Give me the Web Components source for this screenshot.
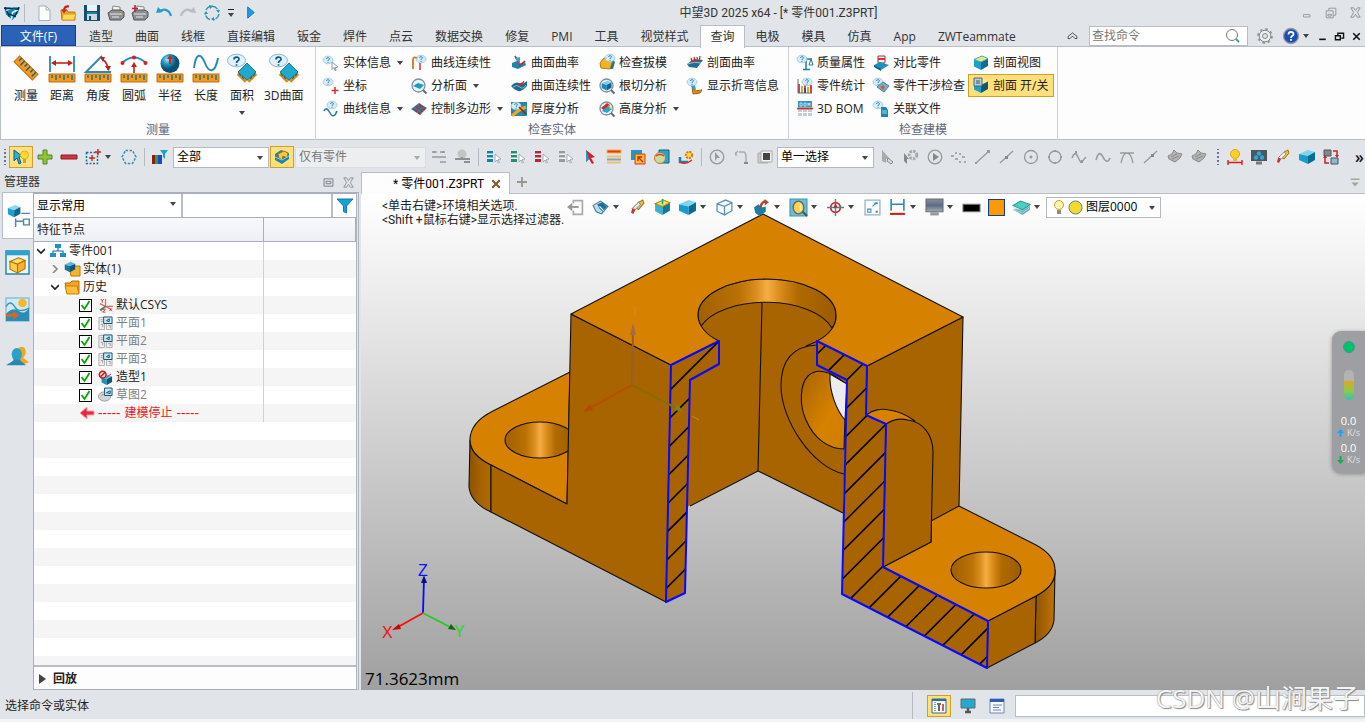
<!DOCTYPE html>
<html lang="zh-CN">
<head>
<meta charset="utf-8">
<title>中望3D 2025 x64</title>
<style>
html,body{margin:0;height:100%}
body{background:#e1e5e9;font:12px/18px "Open Sans","Noto Sans CJK SC",sans-serif;color:#222;overflow:hidden}
</style>
</head>
<body>
<z-app></z-app>
<script>
/* ---------- icon artwork ---------- */
const s=(d,c='#999',w=1,x='')=>`<path d="${d}" fill="none" stroke="${c}" stroke-width="${w}" ${x}/>`;
const f=(d,c,k='none')=>`<path d="${d}" fill="${c}" stroke="${k}"/>`;
const bubble=(x,y)=>`<g transform="translate(${x} ${y})"><ellipse cx="5" cy="4" rx="5" ry="3.8" fill="#d3ebf7" stroke="#8cc0da" stroke-width=".7"/>${s('M3.5 3C3.5 1.2 6.6 1.2 6.4 3C6.2 4 5 3.8 5 5M5 5.8v1','#2a7fa8',1)}</g>`;
const ruler=f('M1 20h26v8H1z','#f39a1c','#c06d10')+s('M4 21v3M8 21v5M12 21v3M16 21v5M20 21v3M24 21v5','#1e6e8c',1.4);
const cube=(a,b,c,k='none')=>f('M1 4.5L9 1l6 2.5L8 7z',a,k)+f('M1 4.5L8 7v8L1 11.5z',b,k)+f('M15 3.5L8 7v8l7-4z',c,k);
const lens=x=>`<circle cx="7.5" cy="7.5" r="6.5" fill="#e6f3f8" stroke="#7c929d" stroke-width="1.3"/>${x}${s('M12 12l3.5 3.5','#55707d',2)}`;
const list=c=>f('M1 2h6v3H1zM1 6h6v3H1zM1 10h6v3H1z',c)+s('M1 5h6M1 9h6','#fff')+f('M9 5l6 5-3 .5 1.5 3-1 .5L11 11l-2 2z','#fff','#aab');
const bigArea=s('M10 19.500l8 8M28 19.500l-8 8','#e08a14',3.600)+s('M11 19l1.500 3M14 22l1.500 3M27 19l-1.500 3M24 22l-1.500 3','#245f78',1.200)+f('M19 9l9 9-9 8-9-8z','#20a8cf','#1180a6')+`<ellipse cx="8.500" cy="6.500" rx="9" ry="6.300" fill="#e2f1f9" stroke="#86b9d4"/>`+s('M6 5.500C6 2.300 11.300 2.300 11 5.500C10.800 7 8.500 6.500 8.500 9M8.500 10.200v1.600','#135a80',1.700);
const plane=f('M1 1.500h6v13H1zM9 8h6v6.500H9z','#eee','#aaa')+s('M3 4h2M3 6h2M3 9h2v3M11 10h2v3','#999')+f('M6 1h9v7H6z','#cfe6f1','#0d4d70')+s('M9 5l3-2v3z','#0d4d70');
const I={
/* quick access */
logo:f('M1 3h15l-2 6-5 6-6-5z','#0d87b5')+f('M2 3l4 9M15 3l-4 9','none','#05283c')+s('M3 6l5-2 5 2-4 2-1 6','#e8f8ff',1.500)+s('M1 4l14 1M5 9l7 3','#0a3049',1.300),
newf:f('M3 1h7l4 4v10.500H3z','#fff','#a9aeb5')+s('M10 1v4h4','#a9aeb5'),
open:f('M1 5h6l1 2h7v8H2z','#f5a81c','#c87800')+f('M3 9h13l-2 6H2z','#ffd75e','#d99a14')+s('M9 1.500C5 1 4 3 4 6','#c8201c',2.200)+f('M1 4.500h6L4 8.500z','#d42a20'),
save:f('M0 0h16v16H0z','#14506e')+f('M3 0h10v6H3z','#e9f3f8')+f('M3 9h10v6H3z','#cfd8dd')+f('M5 11h2v4H5z','#14506e')+s('M3 8h10','#36b0d8'),
print:f('M5 1l7 1v5H4z','#f4f4f4','#888')+f('M0 8l4-3h9l3 2v5l-3 3H2z','#8c8f92','#555')+s('M2 9h12M4 12h7','#e6e6e6')+f('M12 9h2v1h-2z','#e8c020'),
printm:f('M5 1l7 1v5H4z','#f4f4f4','#888')+f('M0 8l4-3h9l3 2v5l-3 3H2z','#8c8f92','#555')+s('M2 9h12M4 12h7','#e6e6e6')+s('M3 0v7M0 3.500h6','#c2203c',1.600),
undo:s('M3 7C7 3 13 4 15 11','#2d9cc4',2.200)+f('M0 8l2-6 5 5z','#2d9cc4'),
redo:s('M13 7C9 3 3 4 1 11','#b9bcc0',2.200)+f('M16 8l-2-6-5 5z','#b9bcc0'),
rot:s('M8 1.200A6.800 6.800 0 0 1 14 5M15 9A6.800 6.800 0 0 1 10 14.500M6 14.500A6.800 6.800 0 0 1 1.300 9M2 5A6.800 6.800 0 0 1 8 1.200','#2a95ae',1.500,'stroke-dasharray="6 1"')+f('M12 5h4l-1.500 3zM0 9l2-3 2 3zM5 0l4 1-3 3zM7 14l3-2v4z','#2a95ae'),
play:f('M5 2l7 6-7 6z','#1b9cf0','#0b76c2'),
min:s('M3 10.500h8v3H3z','#8b9097'),
restore:s('M2.500 5.500h8v8h-8zM5.500 5V2.500h8v8H11M4.500 9.500h4v2h-4z','#8b9097'),
close:s('M3 3l3 0 2 3 2-3h3L10 8l3 5h-3L8 10l-2 3H3l3-5z','#8b9097'),
bmin:s('M4 11.500h8','#111',2),
brestore:s('M3 7h6v5H3zM6 6V4h7v6h-3','#111',1.700),
bclose:s('M4 4l8 8M12 4l-8 8','#111',1.900),
house:s('M2.500 8L8 3.500 13.500 8v2.500H11L8 7.500 5 10.500H2.500z','#333'),
find:`<circle cx="7" cy="7" r="5.500" fill="none" stroke="#777"/>`+s('M11 11l3 3','#3a8fb5',1.800),
gear:`<circle cx="8" cy="8" r="7" fill="none" stroke="#999" stroke-width="1.800" stroke-dasharray="2.700 2.800"/><circle cx="8" cy="8" r="5.800" fill="#eceef0" stroke="#888"/><circle cx="8" cy="8" r="2.500" fill="#e1e5e9" stroke="#888"/>`,
help:`<circle cx="8" cy="8" r="7.500" fill="#1a4fb8" stroke="#999" stroke-width="1.300"/>`+s('M5.500 6.500C5.500 3 10.800 3.200 10.500 6.300C10.300 8 8 7.800 8 10M8 11v1.800','#fff',1.800),
/* measuring */
measure:`<g transform="rotate(45 14 14)">${f('M1 10h26v8H1z','#f39a1c','#c06d10')}${s('M4 10v4M8 10v6M12 10v4M16 10v6M20 10v4M24 10v6','#245f78',1.400)}</g>`,
dist:ruler+s('M2 2v16M26 2v16','#2a8bb0',1.800)+s('M5 9h18','#c22020',1.600)+f('M3 9l5-3v6zM25 9l-5-3v6z','#c22020'),
angle:ruler+s('M18 2L2 18h25','#2a8bb0',2)+s('M18 5q6 4 6 11','#c22020',1.600)+f('M16 3l5 0-2 5zM21 12l6 0-2.500 5z','#c22020'),
arc:ruler+s('M2 9Q14 -2 26 9','#2a8bb0',1.800)+s('M14 19v-7','#c22020',1.600)+f('M11 13l3-5 3 5z','#c22020')+'<g fill="#d42020"><circle cx="2.500" cy="9" r="2"/><circle cx="14" cy="3.500" r="2"/><circle cx="25.500" cy="9" r="2"/></g>',
radius:ruler+'<defs><radialGradient id="b" cx=".35" cy=".3"><stop stop-color="#a4e4f6"/><stop offset=".5" stop-color="#1d97c0"/><stop offset="1" stop-color="#0a4f70"/></radialGradient></defs><circle cx="14" cy="9.500" r="9.500" fill="url(#b)"/>'+s('M14 10V4','#d02020',2)+f('M11 5l3-4 3 4z','#d02020'),
length:ruler+s('M2 14C4-2 9-1 13 9S23 20 26 4','#2a8bb0',2),
area:bigArea,
/* small ribbon icons */
qbody:bubble(0,1)+f('M9 7l6 5-3 .5 1 3h-1l-1-3-2 2z','#fff','#8d99a5'),
qcoord:bubble(0,0)+s('M12 9v7M8.500 12.500h7','#d33',1.600),
qcurve:bubble(4,0)+s('M1 10C3 6 5 8 7 12S12 16 14 10','#2a7fa5',1.600),
cont:bubble(5,0)+s('M2 14V5Q2 1 6 3','#e3701a',1.800)+s('M9 15V8','#c33',1.500),
face:lens(f('M2 8l5-3 6 2-4 4z','#1b9cc4')),
poly:f('M0 8l8-6 8 5-7 7z','#2b7fa5')+s('M2 8l8 5M5 5l7 5M8 3l6 5M4 10l7-6M8 13l6-6','#c22',1.300,'stroke-dasharray="2 1"'),
curva:f('M1 8l5-2 2 3 6-2 1 3-8 4-6-2z','#1b86ad')+s('M4 1l5 9 5-4','#d22',1.600)+f('M4 3l5-1v7z','#31a9d0'),
surfc:f('M0 8q4-5 8-3t8-2v5q-5 6-9 5t-7-5z','#136d93')+s('M5 8l8-4M9 9l4-6','#d22',1.300)+s('M2 9q4-3 7 0t6-2','#66c7e3',1),
thick:f('M0 1h16v14H0z','#2387a9')+bubble(0,1)+s('M1 15q6-6 14-9','#f7a51c',3)+s('M8 6l7 7','#8a2b10',1.600),
draft:f('M1 8l4-5 9 2-3 9-9-1z','#f2b522','#b67a08')+f('M11 14l3-9 2 2-2 7z','#25789c')+bubble(6,-1),
under:lens('<g transform="translate(2 2) scale(.7)">'+cube('#79cfe8','#1a8ab4','#0d658c')+'</g>'),
height:lens(f('M2 7l6-5 3 2-5 6z','#d82828')+f('M3 10l6-5 4 3-5 4z','#2aa4cf')+f('M9 4l4 3-2 1z','#f3c62b')),
seccurv:f('M0 9l7-5 9 1-6 8-8-1z','#1c6f94')+s('M4 3l2 6M7 2l2 7M10 2l1 6M13 1l-1 7','#d22',1.300)+s('M1 9q6-3 13-1','#7bd0e9'),
bend:f('M5 8l3 5 7-1-2 3-7 1z','#e29014','#a95f06')+f('M3 6l5 1 1 5-3-1z','#29a2c9')+bubble(0,0),
mass:s('M9 2v12M6 14.500h7M4 4h11','#1c7ea5',1.500)+s('M12 10l2-6 2 6z','#1c7ea5')+bubble(0,0),
stat:s('M2 15V6M5 15V8M8 15V5M11 15V9M14 15V7','#c33',1.800)+s('M5 15V8M11 15V9','#e9b21a',1.800)+s('M8 15v-5','#2247aa',1.800)+s('M1 1v14h14','#667')+bubble(5,0),
bom:f('M1 1h14v14H1z','#c3cdd4')+f('M1 0h14v6H1z','#3298c2')+s('M3 5V2h2v3zM7 5V2h2v3zM11 5V2l1 2 1-2v3','#cfeaf5',.8)+s('M0 7.500h16','#d22',1.600)+s('M5.500 9v6M10.500 9v6M1 11.500h14','#fff'),
compare:f('M5 1h7v7H5z','#eef','#a33')+f('M5 3h7v2H5z','#d33')+f('M1 10l6-3 9 3-8 5z','#1c93bd')+f('M1 10l7 4v2l-7-4z','#0d5d80'),
clash:bubble(0,0)+f('M4 9l6-5 6 4-5 6z','#6fb4ce','#4b7f93')+f('M7 9l3-2 2 2-2 3z','#d65a3a'),
link:bubble(0,0)+f('M8 6h5l2 3v7H8z','#1b87ad')+s('M9 10h5M9 12h5','#9bdcf0'),
secview:cube('#bfe6ee','#1ba0c8','#0f6e93')+f('M1 4.500L9 1l6 2.500L8 7z','#dff1d8','#4a8')+f('M4 4.500l5-2 3 1-4 2z','#f4e062'),
secon:cube('#fde98a','#1ba0c8','#0f5773')+f('M1 0h8v8H1z','#b5cfda','#567')+s('M3 3h4M3 5h4','#357'),
/* selection bar */
pick:f('M1 1l8 6-3 1 2 6-2 1-2-6-3 3z','#26aee0','#0b5f88')+`<circle cx="11.500" cy="6" r="4" fill="#ffd83c" stroke="#e9b010"/>`+s('M10 11h3M10 13h3','#c88a10',1.400),
plus:f('M6 1h4v5h5v4h-5v5H6v-5H1V6h5z','#8fc637','#55851a'),
minus:f('M0 6h16v4H0z','#d2353c','#8d1c22'),
box:s('M1.500 3.500h11v11h-11z','#1c6e9a',1.500,'stroke-dasharray="2 1.500"')+s('M7 6v6M4 9h6M13 0v6M10 3h6','#c22',1.400),
hex:s('M4.500 1.500h7L15 8l-3.500 6.500h-7L1 8z','#3690b4',1.500,'stroke-dasharray="2.500 1.500"'),
pal:f('M0 6h3v9H0z','#8c1d1d')+f('M3 6h3v9H3z','#29a329')+f('M6 6h4v9H6z','#1d46c8')+f('M8 1h8l-3 4v5l-2-2V5z','#1aa3cf'),
sync:f('M1 5l6-4 8 3v6l-7 5-7-4z','#1b87ad')+f('M4 5l6-3 4 2-1 5-4-2-1 4-3-2z','#ffc83a','#a8720a')+s('M1 8l7 3 7-4','#7fd0e6'),
g1:s('M1 3h5M9 3h5M1 8h14M9 13h6','#999',1.600)+s('M3 2v2M12 2v2','#999',2),
g2:`<circle cx="7" cy="5" r="4.500" fill="#c4c4c4"/>`+s('M0 10h15M9 13h6M7 10V8','#8f8f8f',1.800),
l1:list('#16819f'),l2:list('#2b8a78'),l3:list('#b22a3a'),l4:list('#999'),
redcur:f('M4 1l9 7-4 1 3 5-2 1-3-5-3 3z','#d22030')+f('M4 1v12l3-3z','#1aa0cf'),
rows:f('M1 1h14v3H1z','#e6342a','#f6b32c')+s('M1 7.500h14M1 13.500h14','#e3c27b',2)+s('M1 10.500h14','#8fa0aa',2),
orange:f('M1 1h11v10H1z','#1a9bc4')+f('M5 5h10v10H5z','#f8bd2e','#d93a22')+s('M8 8l5 5M8 12V8h4','#c22',1.300),
glob:f('M5 1h10v13H5z','#2ba4ca','#125f80')+`<circle cx="6" cy="9" r="5.500" fill="#c8dba2" stroke="#b47e2a"/>`+s('M2 7q4-3 8 0','#d33',1.400),
saw:s('M2 8v5h8','#1585b0',2.600)+s('M2 13q6 3 12-2','#c33',1.600)+`<circle cx="11" cy="6" r="3.200" fill="#ffd34d" stroke="#d07a14" stroke-width="2" stroke-dasharray="2 1"/>`,
gclock:`<circle cx="8" cy="8" r="6.800" fill="none" stroke="#999" stroke-width="1.300"/>`+f('M6 3l5 6-3 0-2 3z','#999'),
ghook:s('M2 5l3-3M3 3v4M6 3h4q3 0 3 5v5','#aaa',1.500)+s('M11 14h4','#888',2),
gsq:f('M1 4h10v10H1z','#ccc','#aaa')+f('M4 2h11v11H4z','#f4f4f4','#aaa')+f('M6 4h7v7H6z','#444'),
gcur:f('M3 1l8 9-4 0 0 4-4-2z','#aaa')+f('M9 9l5 4-2 2-4-3z','#ddd','#888'),
ggear:`<circle cx="10" cy="6" r="3.800" fill="none" stroke="#aaa" stroke-width="3" stroke-dasharray="2.500 1"/>`+f('M1 4l5 6-2 0 0 5-3-3z','#888'),
gplay:`<circle cx="8" cy="8" r="6.800" fill="none" stroke="#999" stroke-width="1.300"/>`+f('M6 4l6 4-6 4z','#888'),
gdots:f('M0 6h3v2H0zM4 9h3v2H4zM8 4h2v2H8zM11 7h3v2h-3zM8 12h2v2H8zM4 3h2v2H4zM13 12h2v2h-2z','#aaa'),
gline:s('M1 14L13 3','#999',1.300)+f('M12 1h3v3h-3zM0 13h2v2H0z','#999'),
gline2:s('M1 14L14 2','#999',1.300)+f('M6 7h3v3H6z','#888'),
gline3:s('M1 14L14 2','#999',1.300)+f('M8 5h3v3H8z','#888'),
gcirc:`<circle cx="8" cy="8" r="6.500" fill="none" stroke="#999" stroke-width="1.300"/><circle cx="8" cy="8" r="1.500" fill="#999"/>`,
gcirc2:`<circle cx="8" cy="8" r="6" fill="none" stroke="#999" stroke-width="1.300"/>`+f('M7 1h2v2H7zM7 13h2v2H7zM1 7h2v2H1zM13 7h2v2h-2z','#999'),
gwave:s('M1 9Q4 1 7 8t4 5 4-5','#999',1.400)+f('M4 2h2v3H4zM10 11h2v3h-2z','#999'),
gwave2:s('M1 11Q4 0 8 8t7 1','#999',1.600),
gtan:s('M1 4h14M2 14Q4 4 8 4t6 10','#999',1.300),
gsurf:f('M1 7l4-2 2-4 3 3 5 1-2 4-5 4-6-3z','#b4b4b4','#888')+s('M4 8l6-3M5 10l7-3','#888'),
bulbm:`<circle cx="8" cy="5" r="4.500" fill="#ffd024" stroke="#e0a310"/>`+f('M6 9h4v3H6z','#e8b93a')+s('M1 13.500h14M1 11v5M15 11v5','#c22',1.400),
mon:f('M0 1h16v11H0z','#4d575f')+s('M5 14h6','#777',3)+`<g fill="#2aa9d4"><circle cx="8" cy="4.500" r="2.200"/><circle cx="5" cy="8.500" r="2.200"/><circle cx="11" cy="8.500" r="2.200"/></g>`,
eraser:f('M9 3l4-2 1 3-5 6-3-2z','#f4bc3b','#a77413')+f('M9 3l2 2-5 5-3-1z','#eee','#999')+f('M3 9l3 1-2 4-2-1z','#cd2d2d'),
cube:f('M0 5l9-4 7 2-7 4z','#7fd4ee')+f('M0 5l9 2v8l-9-4z','#1a9ccb')+f('M16 3L9 7v8l7-4z','#0b6b93'),
swap:f('M1 1h7v6H1z','#7d8890','#555')+f('M8 9h7v6H8z','#8fb8cc','#456')+s('M10 2h4v5M6 14H2V9','#c22',1.500)+f('M12 6h4l-2 3zM0 9h4l-2-3z','#c22'),
/* manager */
pin:s('M2.500 3.500h11v9h-11zM5 6.500h6v3H5z','#7a8089',1.200),
funnel:f('M0 1h16L9.500 8v7l-3-1.500V8z','#15a0d6','#0a7dad'),
tree0:s('M10 6.500h6M6 10v6M6 12h5M11.500 10.500h4v4h-4z','#4f89a8',1)+'<g transform="scale(.62)">'+cube('#8ed8ee','#1ba0cc','#0a678e')+'</g>',
tree1:f('M0 0h16v16H0z','#eaf6fb','#2186ab')+f('M0 0h16v3H0z','#2ba5ce')+'<g transform="translate(2 4) scale(.75)">'+cube('#ffe06a','#ffd04a','#f5b52a','#c26a05')+'</g>',
tree2:f('M0 0h16v16H0z','#cfe9f5','#8cc0d8')+s('M0 6q3-5 6 0t10 1','#4b92b5')+f('M0 11q5-5 9-2t7-2v9H0z','#2b8db3')+`<circle cx="11.500" cy="3.500" r="3" fill="#f8b62a"/>`+s('M0 12h6','#e2621f',2)+f('M5 9l4 3-4 3z','#e2621f'),
tree3:f('M8 3q2-3 5-1q2 3-1 7l4 3-6 2z','#f2a51f')+`<ellipse cx="7.500" cy="6.500" rx="3.500" ry="4.500" fill="#2ba0c8"/>`+f('M0 14l5-3v-1h5v1l4 3z','#2488b0'),
part:f('M5 1h6v4H5zM0 10h6v4H0zM10 10h6v4h-6z','#1a93bd')+s('M8 5v3M3 10V8h10v2','#1a6f92',1.200),
solid:f('M5 5h11v10H7z','#f3b52b','#b47b0c')+'<g transform="scale(.75)">'+cube('#5cb9d8','#17779d','#0c5878')+'</g>',
folder:f('M1 4h5l2-2h7v12H3z','#f3a620','#b96a08')+f('M1 7h12l2 8H3z','#ffbf3a','#c87a0a'),
csys:s('M8 1v8h8M8 9l-5 5M2 6l12 6','#d66',1.300)+s('M2 13l6-4','#2b8a6a',1.500)+s('M3 1l1.500 2L6 1M4.500 3v2M12 11l3 3M15 11l-3 3M5 12h3l-3 3h3','#c33'),
plane,
shape:'<g transform="translate(3 4) scale(.8)">'+cube('#66bfdd','#1a93bd','#0c5878')+'</g>'+`<circle cx="5" cy="5" r="3.600" fill="#f6d0d0" stroke="#c01818" stroke-width="1.600"/>`+s('M2.500 7.500l5-5','#c01818',1.500)+s('M9 8l5-4','#d33'),
sketch:`<ellipse cx="7" cy="9" rx="6.500" ry="5" fill="#d5d5d5" stroke="#999"/>`+s('M3 9q4-5 8-1','#999')+f('M7 0h8v8H7z','#cfe6f1','#0d4d70')+s('M9 5l4-2v3z','#0d4d70'),
stop:f('M1 8l7-6v4h7v4H8v4z','#e8283c','#f7a0a8'),
/* view bar */
exit:s('M6 4V1.500h8.500v13H6V11','#aaa',1.600)+s('M4 7.500h7','#999',1.800)+f('M0 7.500l5-4v8z','#999'),
view:f('M1 6l7-4 7 5-6 7-5-2z','#bcdcea','#3d7c99')+f('M5 5l5-2 4 4-4 5-3-3z','#1a6f9c')+s('M7 7l4 4','#fff'),
ycube:cube('#ffe34a','#35b3d4','#137a9e')+f('M1 4.500L9 1l6 2.500L8 7z','#ffe34a','#a88a10')+s('M8 5V0','#1a9','1.500'),
wire:s('M1 4.500L9 1l6 2.500v7.500L8 15l-7-3.500zM1 4.500L8 7v8M8 7l7-3.500','#5691b0',1.200),
curv2:f('M1 8l4-3 3 3 4-1v5l-6 4-4-3z','#167fa9')+s('M7 9Q7 3 12 2','#b34633',2.200)+f('M11 0l4 3-4 3z','#b34633'),
fit:f('M0 0h16v16H0z','#6fbcd8','#3097bd')+`<ellipse cx="8" cy="8" rx="5" ry="6" fill="#ffd44a" stroke="#666" stroke-width="1.300"/>`+s('M12 12l4 4','#555',2)+s('M10 5v6','#fff6c0',1.500),
target:`<circle cx="8" cy="8" r="4.500" fill="none" stroke="#c22" stroke-width="1.600"/>`+s('M8 0v16M0 8h16','#4d7f9f',1.300)+f('M8 4l2 4H6z','#c22'),
marks:s('M1 1h14v14H1z','#8fb5c8',1.200)+s('M3.500 9.500h3v3h-3zM8 7l3-3','#3892b8')+f('M10 3h3v2h-3zM11 11h2v2h-2z','#3892b8'),
dim:s('M2 0v11M14 0v11M2 5h12','#2a8bb0',1.500)+s('M1 14h14','#c22',2),
screen:'<defs><linearGradient id="m" x2="0" y2="1"><stop stop-color="#8a9098"/><stop offset=".5" stop-color="#5c6b85"/><stop offset="1" stop-color="#a5afbb"/></linearGradient></defs>'+f('M0 0h16v12H0z','url(#m)','#666c74')+s('M4 14h8','#999',3),
black:f('M0 5h16v7H0z','#000','#777'),
osq:f('M.5.5h15v15H.5z','#ff9900','#11408f'),
layer:f('M0 10l9 5 7-5V6l-9 3z','#6aa9b5')+s('M0 8l9 3 7-5M0 10l9 3 7-5','#b8dde6',.8)+f('M0 6l7-4 9 3-7 5z','#4dd0c0','#2a9f98'),
bulb:`<circle cx="8" cy="6" r="4.500" fill="#fff6b0" stroke="#c9a01c"/>`+s('M6 12h4M6 14h4','#666',1.500),
dot:`<circle cx="8" cy="8" r="7" fill="#f4da2c" stroke="#4b8398"/>`,
tabx:s('M3 3l10 10M13 3L3 13','#7b5d2a',2.600),
addt:s('M8 3v10M3 8h10','#9c948f',1.800),
down:f('M2 3h11v2H2zM3 8h9l-4.500 5z','#aaa49e'),
/* status bar */
st1:f('M1 1h14v14H1z','#f4f8fb','#2d6da3')+f('M1 1h14v2H1z','#2d6da3')+s('M4 4v10','#777',1.500,'stroke-dasharray="1 1"')+s('M8 13V7M6 6h4','#444',1.600)+s('M12 13V6','#c33',1.600),
st2:f('M1 1h14v9H1z','#25a8d0','#666')+s('M8 10v3M5 14h6','#555',2.400),
st3:f('M1 1h14v14H1z','#f6f8fb','#6d86b8')+f('M1 1h14v3H1z','#2f5bb5')+s('M4 7h9M4 9.500h6M4 12h8','#6d86b8')
};

/* ---------- base element ---------- */
class Base extends HTMLElement{
  connectedCallback(){
    if(this.shadowRoot)return;
    this.attachShadow({mode:'open'}).innerHTML=`<style>
*{box-sizing:border-box}
button,input,select{font:inherit;color:inherit;margin:0;padding:0;border:0;background:none;border-radius:0;outline:0}
z-icon{flex:none}
${this.css()}</style>${this.html()}`;
  }
  at(n,d=''){return this.getAttribute(n)??d}
  css(){return ''}
}
const def=(n,css,html)=>customElements.define(n,class extends Base{css(){return css}html(){return html(this)}});

def('z-icon',':host{display:inline-flex}svg{display:block;overflow:visible}',e=>{
  const z=e.at('size','16'),v=e.at('box','16');
  return `<svg width="${z}" height="${z}" viewBox="0 0 ${v} ${v}" aria-hidden="true">${I[e.at('name')]||''}</svg>`;
});
def('z-arrow',':host{display:inline-block;flex:none;width:0;height:0;border:3px solid transparent;border-top:4px solid #444;border-bottom:0}',()=>'');
def('z-sep',':host{display:block;flex:none;width:7px;height:18px;background:linear-gradient(#b6bac0,#b6bac0) center/1px 100% no-repeat}',()=>'');
def('z-grip',':host{display:block;flex:none;width:9px;height:16px;background:radial-gradient(circle,#6f7683 1px,transparent 1px) center/4px 4px repeat-y}',()=>'');

/* icon-only button, optionally with a drop-down mark */
def('z-tool',`:host{display:flex;flex:none}
button{display:flex;align-items:center;justify-content:center;width:24px;height:22px}
:host([on]) button{background:#ffe07a;border:1px solid #cf9f2e}
:host([menu]) button{width:36px;justify-content:flex-start;padding-left:4px;gap:4px}
:host([wide]) button{width:25px}:host([wide][menu]) button{width:37px}`,
e=>`<button type="button" aria-label="${e.at('label',e.at('icon'))}"><z-icon name="${e.at('icon')}" size="${e.at('size','16')}"></z-icon>${e.hasAttribute('menu')?'<z-arrow></z-arrow>':''}</button>`);

/* icon-over-text ribbon button */
def('z-big',`:host{display:block}
button{display:flex;flex-direction:column;align-items:center;min-width:36px;padding:7px 4px 0}
span{margin-top:4px;line-height:20px;white-space:nowrap}z-arrow{margin-top:5px}`,
e=>`<button type="button"><z-icon name="${e.at('icon')}" size="28" box="28"></z-icon><span><slot></slot></span>${e.hasAttribute('menu')?'<z-arrow></z-arrow>':''}</button>`);

/* one-line ribbon button */
def('z-cmd',`:host{display:block}
button{display:flex;align-items:center;height:23px;padding:0 4px;white-space:nowrap;border:1px solid transparent}
span{margin:0 6px 0 4px}
:host([on]) button{background:#ffe07a;border-color:#cf9f2e}
:host([on]) span{margin-right:0}`,
e=>`<button type="button"><z-icon name="${e.at('icon')}"></z-icon><span><slot></slot></span>${e.hasAttribute('menu')?'<z-arrow></z-arrow>':''}</button>`);

def('z-group',`:host{display:flex;flex-direction:column;border-right:1px solid #cdd1d6;box-sizing:border-box;height:93px}
div{display:flex;flex:1}p{margin:0;text-align:center;line-height:20px;color:#5f6676}`,
e=>`<div><slot></slot></div><p>${e.at('label')}</p>`);
def('z-col',':host{display:block;padding-top:4px}',()=>'<slot></slot>');

/* labelled drop-down list */
def('z-combo',`:host{display:flex;position:relative;background:#fff;border:1px solid #b5bac2;height:21px;box-sizing:border-box;align-items:center;color:#000}
select{appearance:none;flex:1;min-width:0;height:100%;padding:0 16px 0 3px;opacity:1}
z-arrow{position:absolute;right:5px;top:8px;pointer-events:none}
:host([off]){background:#eceef0;color:#777;border-color:#d9dce0}:host([off]) z-arrow{opacity:.4}
:host([plain]){border:0;height:100%}`,
e=>`<slot></slot><select aria-label="${e.at('label')}" ${e.hasAttribute('off')?'disabled':''} style="color:inherit"><option>${e.at('value')}</option></select><z-arrow></z-arrow>`);

/* ---------- window parts ---------- */
def('z-title',`:host{display:flex;height:25px;align-items:center}
h1{flex:1;margin:0;font:12px/18px Roboto,"Noto Sans CJK SC",sans-serif;text-align:center;color:#333;white-space:nowrap}
.q,.w{display:flex;align-items:center}.w{width:70px}z-icon.l{margin:0 1px 0 3px}z-sep{margin-right:4px}
.m{width:14px;height:8px;display:flex;justify-content:center;align-items:flex-start}.m button{display:flex;border-top:1px solid #222;padding-top:3px}`,
()=>`<div class="q"><z-icon class="l" name="logo" size="17"></z-icon><z-sep></z-sep>
${[['newf','新建'],['open','打开'],['save','保存'],['print','打印'],['printm','批量打印'],['undo','撤销'],['redo','重做'],['rot','重生成']].map(a=>`<z-tool icon="${a[0]}" label="${a[1]}"></z-tool>`).join('')}
<div class="m"><button type="button" aria-label="自定义"><z-arrow></z-arrow></button></div><z-tool icon="play" label="运行" size="15"></z-tool></div>
<h1>中望3D 2025 x64 - [* 零件001.Z3PRT]</h1>
<div class="w"><z-tool icon="min" label="最小化" size="13"></z-tool><z-tool icon="restore" label="还原" size="14"></z-tool><z-tool icon="close" label="关闭" size="15"></z-tool></div>`);

def('z-menubar',`:host{display:flex;height:22px;align-items:stretch;position:relative}
nav{display:flex}a{padding:2px 11px 0;line-height:20px;color:#333;text-decoration:none;white-space:nowrap}
a.file{background:#2a62b8;color:#fff;border:1px solid #1b3f86;width:75px;margin:0 2px 0 1px;padding:1px 0 0;text-align:center;height:21px}
a.on{background:#fdfdfd;border:1px solid #b9bec6;border-bottom:0;padding:1px 9px 0 10px;width:45px;margin-bottom:-1px;position:relative;z-index:1}
.r{margin-left:auto;display:flex;align-items:center}
label{display:flex;align-items:center;width:159px;height:20px;background:#fff;border:1px solid #b9bec6;margin:0 5px 0 5px}
input{flex:1;min-width:0;padding-left:2px;line-height:18px}input::placeholder{color:#777;opacity:1}
label z-icon{margin-right:6px}.b z-tool{width:17px;justify-content:center}.b{display:flex}.h{margin:0 -1px 0 2px}`,
()=>`<nav><a href="#" class="file">文件(F)</a>${'造型,曲面,线框,直接编辑,钣金,焊件,点云,数据交换,修复,PMI,工具,视觉样式,查询,电极,模具,仿真,App,ZWTeammate'.split(',').map(t=>`<a href="#"${t=='查询'?' class="on" aria-current="page"':''}>${t}</a>`).join('')}</nav>
<div class="r"><z-tool icon="house" label="收起功能区" size="13"></z-tool><label><input type="search" aria-label="查找命令" placeholder="查找命令"><z-icon name="find"></z-icon></label><z-tool icon="gear" label="设置"></z-tool><z-tool class="h" menu icon="help" label="帮助"></z-tool>
<div class="b"><z-tool icon="bmin" label="最小化" size="13"></z-tool><z-tool icon="brestore" label="还原" size="13"></z-tool><z-tool icon="bclose" label="关闭" size="13"></z-tool></div></div>`);

const cmds=a=>a.map(([i,t,o=''])=>`<z-cmd icon="${i}" ${o}>${t}</z-cmd>`).join('');
def('z-ribbon',`:host{display:flex;background:#fdfdfd;border:1px solid #b9bec6;border-right:0;height:94px;box-sizing:border-box}
.g1{width:315px}.g1 z-big:first-child{margin-left:7px}
.g2{width:473px}.g3{width:269px}.g2 z-col:first-child{margin-left:2px}.g3 z-col:first-child{margin-left:3px}
.a{width:88px}.b{width:100px}.c{width:76px}.d{width:100px}`,
()=>`<z-group class="g1" label="测量">${[['measure','测量'],['dist','距离'],['angle','角度'],['arc','圆弧'],['radius','半径'],['length','长度']].map(a=>`<z-big icon="${a[0]}">${a[1]}</z-big>`).join('')}<z-big icon="area" menu>面积</z-big><z-big icon="area">3D曲面</z-big></z-group>
<z-group class="g2" label="检查实体">
<z-col class="a">${cmds([['qbody','实体信息','menu'],['qcoord','坐标'],['qcurve','曲线信息','menu']])}</z-col>
<z-col class="b">${cmds([['cont','曲线连续性'],['face','分析面','menu'],['poly','控制多边形','menu']])}</z-col>
<z-col class="a">${cmds([['curva','曲面曲率'],['surfc','曲面连续性'],['thick','厚度分析']])}</z-col>
<z-col class="a">${cmds([['draft','检查拔模'],['under','根切分析'],['height','高度分析','menu']])}</z-col>
<z-col>${cmds([['seccurv','剖面曲率'],['bend','显示折弯信息']])}</z-col></z-group>
<z-group class="g3" label="检查建模">
<z-col class="c">${cmds([['mass','质量属性'],['stat','零件统计'],['bom','3D BOM']])}</z-col>
<z-col class="d">${cmds([['compare','对比零件'],['clash','零件干涉检查'],['link','关联文件']])}</z-col>
<z-col>${cmds([['secview','剖面视图'],['secon','剖面 开/关','on']])}</z-col></z-group>`);

const tools=t=>t.split(' ').map(n=>n=='|'?'<z-sep></z-sep>':`<z-tool icon="${n}"></z-tool>`).join('');
def('z-selbar',`:host{display:flex;height:32px;padding-top:2px;box-sizing:border-box;align-items:center;overflow:hidden}
.s1{width:96px;margin:0 1px}.s2{width:131px;margin:0 1px}.s3{width:97px;margin:0 1px 0 0}.e{margin:0 1px 0 2px}
b{margin-left:auto;padding-right:1px;font-size:16px;font-weight:600;color:#111}`,
()=>`<z-grip></z-grip><z-tool icon="pick" on label="智能选择"></z-tool>${tools('plus minus')}<z-tool icon="box" menu label="框选"></z-tool>${tools('hex | pal')}
<z-combo class="s1" label="过滤器" value="全部"></z-combo><z-tool icon="sync" on label="同步"></z-tool><z-combo class="s2" off label="范围" value="仅有零件"></z-combo>
${tools('g1 g2 | l1 l2 l3 l4 redcur rows orange glob saw | gclock ghook gsq')}<z-combo class="s3" label="选择方式" value="单一选择"></z-combo>
${tools('gcur ggear gplay gdots gline gline2 gcirc gcirc2 gwave gwave2 gtan gline3 gsurf gsurf')}<z-grip class="e"></z-grip>${tools('bulbm mon eraser cube swap')}<b>»</b>`);

/* ---------- feature tree ---------- */
const chev=o=>`<svg class="x" width="8" height="8" viewBox="0 0 8 8">${o?s('M0 2l4 4 4-4','#222',1.6):s('M2 0l4 4-4 4','#888',1.6)}</svg>`;
def('z-tree',`:host{display:flex;flex-direction:column;flex:1;min-height:0;background:#fff repeating-linear-gradient(#fff 0 18px,#f5f5f5 18px 36px) 0 24px no-repeat}
table{border-collapse:separate;border-spacing:0;table-layout:fixed;width:100%}
th{height:24px;padding:0 3px;text-align:left;font-weight:400;background:linear-gradient(#f8f9fb,#eceff5);border:solid #a9b0bb;border-width:0 1px 1px 0}
th:first-child,td:first-child{width:230px}
td{height:18px;padding:0;line-height:18px;white-space:nowrap;border:0}td:first-child{border-right:1px solid #cdd0da}
td>div{display:flex;align-items:center;height:18px}
.x{margin:0 5px 0 3px}.x+z-icon,input+z-icon{margin-right:3px}
.l1{padding-left:14px}.l2{padding-left:45px}.dim{color:#808080}.stop{color:#f01818}.stop z-icon{margin-right:3px}.stop b{font-weight:400;margin:0 4px}.stop i{font-style:normal;font-size:14px}
input{appearance:none;width:13px;height:13px;border:1px solid #000;margin-right:6px;background:#fff url("data:image/svg+xml,%3Csvg xmlns='http://www.w3.org/2000/svg' viewBox='0 0 11 11'%3E%3Cpath d='M1.500 5l3 4 5-8' fill='none' stroke='%2309a409' stroke-width='1.800'/%3E%3C/svg%3E")}`,
()=>{
 const row=(c,h)=>`<tr><td><div class="${c}">${h}</div></td><td></td></tr>`;
 const item=(i,t,c='')=>row('l2 '+c,`<input type="checkbox" checked aria-label="${t}"><z-icon name="${i}" size="15"></z-icon><span>${t}</span>`);
 return `<table><thead><tr><th scope="col">特征节点</th><th scope="col"></th></tr></thead><tbody>
${row('',chev(1)+'<z-icon name="part"></z-icon><span>零件001</span>')}
${row('l1',chev(0)+'<z-icon name="solid"></z-icon><span>实体(1)</span>')}
${row('l1',chev(1)+'<z-icon name="folder"></z-icon><span>历史</span>')}
${item('csys','默认CSYS')}${item('plane','平面1','dim')}${item('plane','平面2','dim')}${item('plane','平面3','dim')}${item('shape','造型1')}${item('sketch','草图2','dim')}
${row('l2 stop','<z-icon name="stop"></z-icon><i>-----</i><b>建模停止</b><i>-----</i>')}</tbody></table>`;
});

def('z-manager',`:host{display:flex;flex-direction:column;width:359px;flex:none}
header{display:flex;height:20px;align-items:center;padding:0 1px 0 4px}h2{flex:1;margin:0;font:inherit;color:#333}
header z-tool{width:20px;justify-content:center}
main{flex:1;display:flex;min-height:0}
nav{width:33px;flex:none}nav button{display:flex;align-items:center;justify-content:center;width:31px;height:47px;margin-left:2px}
nav button.on{background:#fdfdfd;border:1px solid #b9bec6;border-right:0}
section{flex:1;display:flex;flex-direction:column;min-width:0;border:1px solid #a9b0bb;border-right:3px double #b0b5be;border-top-width:2px}
.f{display:flex;height:24px;border-bottom:1px solid #a9b0bb;background:#fff}
.f z-combo{width:149px;border-right:2px solid #b9bec6;height:23px}.f input{flex:1;min-width:0;background:#fff}.f button{width:25px;display:flex;align-items:center;justify-content:center;border-left:2px solid #b9bec6}
.p{height:24px;flex:none;display:flex;align-items:center;gap:7px;padding:2px 0 0 5px;background:#fdfdfd;border-top:2px solid #b9bec6;font-weight:600}
.p i{border:5px solid transparent;border-left:7px solid #444;border-right:0}`,
()=>`<header><h2>管理器</h2><z-tool icon="pin" label="浮动" size="13"></z-tool><z-tool icon="close" label="关闭" size="15"></z-tool></header>
<main><nav>${['历史管理','零件库','视图管理','角色管理'].map((t,i)=>`<button type="button" class="${i?'':'on'}" aria-label="${t}"><z-icon name="tree${i}" size="23"></z-icon></button>`).join('')}</nav>
<section><div class="f"><z-combo plain label="显示" value="显示常用"></z-combo><input aria-label="过滤"><button type="button" aria-label="筛选"><z-icon name="funnel" size="16"></z-icon></button></div>
<z-tree></z-tree><button class="p" type="button"><i></i>回放</button></section></main>`);

/* ---------- sectioned solid ---------- */
const hatch=Array.from({length:22},(_,k)=>{const c=1060+k*27.8;return `M600 ${(c-600).toFixed(1)}L1000 ${(c-1000).toFixed(1)}`}).join('');
const SL='M671 365L719 341V364L690 380L685 593L666 602Z', SR='M817 341V365L847 380L842 594L987 668L988 621L883 567L886 424L866 415L867 366Z';
const TOPF='#d68200',SIDE='#a86400';
def('z-model',`:host{display:block}svg{display:block;width:100%;height:100%}text{font:16px "Liberation Sans",sans-serif}`,
()=>`<svg viewBox="361 194 1004 496" role="img" aria-label="剖面模型"><defs>
<linearGradient id="h"><stop stop-color="#a06000"/><stop offset=".3" stop-color="#bb7105"/><stop offset=".42" stop-color="#d98d1e"/><stop offset=".5" stop-color="#f5ad42"/><stop offset=".6" stop-color="#d98a1a"/><stop offset=".72" stop-color="#b06a00"/><stop offset="1" stop-color="#9b5c00"/></linearGradient>
<linearGradient id="el"><stop stop-color="#8e5400"/><stop offset=".6" stop-color="#a86400"/><stop offset="1" stop-color="#b06a00"/></linearGradient>
<linearGradient id="er"><stop stop-color="#8e5400"/><stop offset="1" stop-color="#c07408"/></linearGradient>
<linearGradient id="bo" x1="0" x2="1" y1="0" y2="1"><stop stop-color="#a86400"/><stop offset=".6" stop-color="#d68200"/><stop offset="1" stop-color="#cf7d00"/></linearGradient>
<clipPath id="c"><path d="${SL}${SR}"/></clipPath><clipPath id="lc"><path d="M460 400H568V480H460z"/></clipPath></defs>
<g stroke="#111" stroke-width="1.1" stroke-linejoin="round" fill="${SIDE}">
<path d="M470 440L469 487C470 497 478 506 491 512V465C477 458 470 449 470 440z" fill="url(#el)"/>
<path d="M570 372L493 411C479 418 470 428 470 440C470 449 477 458 491 465L567 504z" fill="${TOPF}"/>
<ellipse cx="540" cy="440" rx="35" ry="18" fill="url(#h)" clip-path="url(#lc)"/>
<path d="M571 314L671 365L666 602L491 512V465L567 504z"/>
<path d="M698 300H836V345L817 364L847 380L843 513L758 471L687 507L690 380L719 364V352H698z" stroke="none"/>
<path d="M690 506L758 471L843 513" fill="none"/><path d="M762 303L758 471"/>
<path d="M698 315A69 36 0 0 1 836 315C836 322 834 326 832 328A69 36 0 0 0 701 326C699 323 698 319 698 315z" fill="url(#h)"/>
<path d="M806 346L818 341M817 345C796 346 781 356 781 386C781 420 812 467 844 474" fill="none"/>
<path d="M846 384C830 370 816 368 808 376C800 384 799 405 806 420C814 439 829 449 844 449z" fill="url(#bo)"/>
<path d="M830 374L847 384L845 420C837 411 829 392 830 374z" fill="#ececf0"/>
<path d="M963 317L867 366L866 415L886 424L883 567L959 506z"/>
<path d="M1055 570L1054 620C1053 629 1047 637 1035 643L1036 596C1049 589 1056 580 1055 570z" fill="url(#er)"/>
<path d="M988 621L1036 596L1035 643L987 668z"/>
<path d="M883 567L931 542V521L959 506L1036 545C1049 552 1055 560 1055 570C1056 580 1049 589 1036 596L988 621z" fill="${TOPF}"/>
<ellipse cx="986" cy="570" rx="35" ry="18" fill="url(#h)"/>
<path d="M866 415C872 410 882 408 889 410C898 411 908 416 915 421L886 424z" fill="${TOPF}"/>
<path d="M886 424C892 420 900 418 908 420C923 422 933 435 933 452L931 542L883 567z"/>
<path d="M763 214L963 317L867 366L817 341C829 335 837 325 836 315A69 36 0 0 0 698 315C698 325 706 335 719 341L671 365L571 314z" fill="${TOPF}"/></g>
<path d="${SL}${SR}" fill="${SIDE}"/><path d="${hatch}" clip-path="url(#c)" stroke="#000" stroke-width="1.600"/>
<path d="${SL}${SR}" fill="none" stroke="#0808ff" stroke-width="2" stroke-linejoin="round"/>
<g stroke-width="2" fill="none"><path d="M632 385L633 330" stroke="#9d5a2a"/><path d="M633 323l-3 12h6z" fill="#a56a48" stroke="none"/><path d="M635 306v9" stroke="#cf8a38" stroke-width="1"/><path d="M632 385L590 408" stroke="#b85000"/><path d="M583 412l7-8 3 6z" fill="#b84800" stroke="none"/><path d="M632 385L676 408" stroke="#8b6b00"/><path d="M683 412l-9-2 4-6z" fill="#7b8412" stroke="none"/><path d="M692 416l7 4" stroke="#c98524" stroke-width="1"/></g>
<g stroke-width="1.800" fill="none"><path d="M423 613L424 578" stroke="#0808ff"/><path d="M424 575l-3 8h6z" fill="#001090"/><path d="M423 613L398 627" stroke="#f01010"/><path d="M392 630l7-6 2 5z" fill="#c00"/><path d="M423 613L450 627" stroke="#22cc22"/><path d="M456 630l-8-1 3-5z" fill="#175f17"/></g>
<text x="418" y="576" fill="#1010ff">Z</text><text x="382" y="638" fill="#f01010">X</text><text x="454" y="637" fill="#22dd22">Y</text></svg>`);

/* network speed overlay */
def('z-net',`:host{display:flex;flex-direction:column;align-items:center;width:33px;height:142px;box-sizing:border-box;background:#9d9fa2;border-radius:9px 0 0 9px;box-shadow:0 1px 4px #0005;color:#fff;font-size:11px;line-height:14px;padding-top:10px}
i{width:12px;height:12px;border-radius:6px;background:#00c268;border:1px solid #4d8fa0}
u{width:10px;height:30px;margin:17px 0 14px;border-radius:5px;background:linear-gradient(#b2b3b5 36%,#e5a51e 36%,#8dc94a 70%,#2fc2b4)}
small{display:flex;align-items:center;gap:3px;font-size:9px;line-height:9px;color:#dfe0e2}div+div{margin-top:4px}div{text-align:center}`,
()=>`<i></i><u></u><div>0.0<small><svg width="7" height="8" viewBox="0 0 7 8"><path d="M3.500 0L7 4H4.500v4h-2V4H0z" fill="#18a4f5"/></svg>K/s</small></div><div>0.0<small><svg width="7" height="8" viewBox="0 0 7 8"><path d="M3.500 8L7 4H4.500V0h-2v4H0z" fill="#10b050"/></svg>K/s</small></div>`);

const vt=t=>t.split(' ').map(n=>`<z-tool wide size="17" icon="${n.replace('+','')}" ${n.endsWith('+')?'menu':''}></z-tool>`).join('');
def('z-view',`:host{display:flex;flex-direction:column;flex:1;min-width:0;margin-left:2px}
.t{display:flex;height:22px;align-items:flex-end;border-bottom:1px solid #b9bec6}
.tab{display:flex;align-items:center;width:149px;height:22px;margin-bottom:-1px;padding-left:31px;background:#fdfdfd;border:1px solid #b9bec6;border-bottom:0;color:#000}
.tab a{color:inherit;text-decoration:none;white-space:nowrap;font-family:Roboto,"Noto Sans CJK SC",sans-serif}.t>:last-child{margin-left:auto;width:20px;justify-content:center}
.c{position:relative;flex:1;min-height:0;background:linear-gradient(#fff,#a0a0a0)}
z-model{position:absolute;inset:0}
.o{position:relative;display:flex;align-items:flex-start}
p{margin:5px 0 0 21px;width:181px;line-height:14px;white-space:nowrap;font-family:Roboto,"Noto Sans CJK SC",sans-serif}
.v{display:flex;align-items:center;padding-top:2px}z-combo{width:115px;padding-left:3px}z-combo z-icon{margin-left:1px}
.s{position:absolute;left:4px;bottom:0;font-size:17px;line-height:22px;color:#000}
z-net{position:absolute;right:0;top:137px}`,
()=>`<div class="t"><div class="tab"><a href="#">* 零件001.Z3PRT</a><z-tool icon="tabx" label="关闭" size="12"></z-tool></div><z-tool icon="addt" label="新建"></z-tool><z-tool icon="down" label="列表" size="13"></z-tool></div>
<div class="c"><z-model></z-model><div class="o"><p>&lt;单击右键&gt;环境相关选项.<br>&lt;Shift +鼠标右键&gt;显示选择过滤器.</p>
<div class="v">${vt('exit view+ eraser ycube cube+ wire+ curv2+ fit+ target+ marks dim+ screen+ black osq layer+')}<z-combo label="图层" value="图层0000"><z-icon name="bulb"></z-icon><z-icon name="dot" size="15"></z-icon></z-combo></div></div>
<div class="s">71.3623mm</div><z-net></z-net></div>`);

def('z-status',`:host{display:flex;position:relative;height:32px;box-sizing:border-box;align-items:center;border-bottom:3px solid #f2f5f7;padding:2px 0 0 5px}
output{flex:1}z-sep{height:27px;margin-right:8px}input{width:350px;height:22px;background:#fff;border:1px solid #b9bec6;margin-left:4px}
z-tool{width:29px;justify-content:center}
.wm{position:absolute;right:6px;top:-10px;font-size:26px;line-height:36px;color:#f4f4f4;text-shadow:1px 1px 1px #888,0 0 1px #777}`,
()=>`<output>选择命令或实体</output><z-sep></z-sep><z-tool on icon="st1" label="管理器"></z-tool><z-tool icon="st2" label="显示"></z-tool><z-tool icon="st3" label="输出"></z-tool><input aria-label="命令"><div class="wm">CSDN @山涧果子</div>`);

def('z-app',`:host{display:flex;flex-direction:column;height:100vh}main{flex:1;display:flex;min-height:0}z-ribbon{margin-top:-1px}`,
()=>`<z-title></z-title><z-menubar></z-menubar><z-ribbon></z-ribbon><z-selbar></z-selbar><main><z-manager></z-manager><z-view></z-view></main><z-status></z-status>`);
</script>
</body>
</html>
